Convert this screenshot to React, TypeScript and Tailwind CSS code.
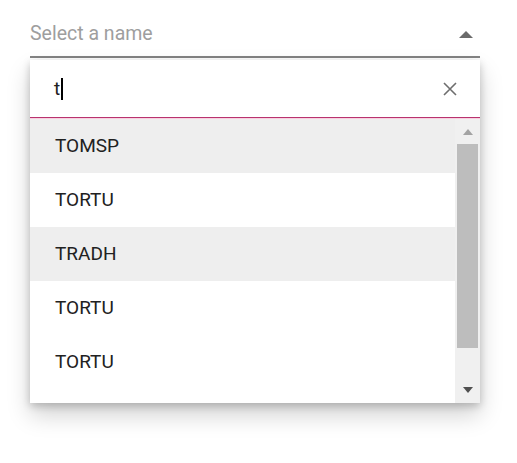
const items = [
  { name: "TOMSP", active: true },
  { name: "TORTU", active: false },
  { name: "TRADH", active: true },
  { name: "TORTU", active: false },
  { name: "TORTU", active: false },
];

export default function App() {
  return (
    <div className="w-[517px] h-[463px] bg-white pl-[30px] font-['Roboto',sans-serif]">
      <div className="w-[450px]">
        {/* Dropdown input */}
        <div className="flex items-center justify-between pt-[21px] pb-[9px] border-b-2 border-[#858585]">
          <span className="text-[19.5px] leading-[26px] text-[#9e9e9e]">Select a name</span>
          <svg width="14" height="7" viewBox="0 0 14 7" className="mr-[7px]">
            <path d="M0 7 L7 0 L14 7 Z" fill="#6b6b6b" />
          </svg>
        </div>

        {/* Popup */}
        <div className="mt-[2px] bg-white shadow-[0_12px_22px_rgba(0,0,0,0.18),0_3px_8px_rgba(0,0,0,0.2)]">
          <div className="flex items-center h-[58px] border-b border-[#b8336e] pl-[24px] pr-[23px]">
            <span className="text-[19px] text-[#212121] leading-none">t</span>
            <span className="ml-[1px] w-[2px] h-[22px] bg-black" />
            <div className="flex-1" />
            <svg width="14" height="14" viewBox="0 0 14 14">
              <path d="M1 1 L13 13 M13 1 L1 13" stroke="#6e6e6e" strokeWidth="1.6" />
            </svg>
          </div>
          <div className="h-px bg-[#f9cfe0]" />
          <div className="flex h-[284px] overflow-hidden">
            <div className="flex-1">
              {items.map((item, i) => (
                <div
                  key={i}
                  className={`h-[54px] flex items-center pl-[25px] text-[19px] text-[#212121] ${
                    item.active ? "bg-[#eeeeee]" : "bg-white"
                  }`}
                >
                  {item.name}
                </div>
              ))}
            </div>
            <div className="w-[25px] bg-[#f0f0f0] flex flex-col items-center pt-[10px]">
              <svg width="10" height="6" viewBox="0 0 10 6">
                <path d="M0 6 L5 0 L10 6 Z" fill="#a3a3a3" />
              </svg>
              <div className="mt-[9px] w-[21px] h-[204px] bg-[#bdbdbd]" />
              <div className="flex-1" />
              <svg width="10" height="6" viewBox="0 0 10 6" className="mb-[10px]">
                <path d="M0 0 L10 0 L5 6 Z" fill="#505050" />
              </svg>
            </div>
          </div>
        </div>
      </div>
    </div>
  );
}
